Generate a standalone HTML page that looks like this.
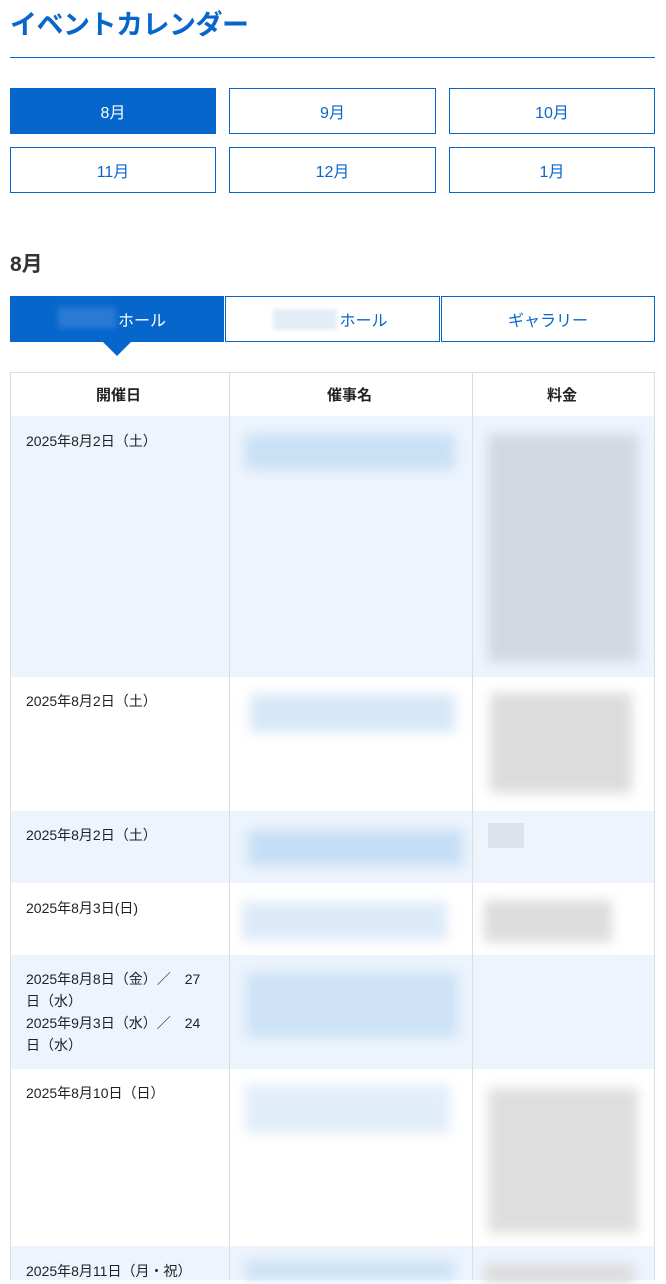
<!DOCTYPE html>
<html><head><meta charset="utf-8"><style>
*{margin:0;padding:0;box-sizing:border-box}
body{width:666px;height:1280px;overflow:hidden;background:#fff;font-family:"Liberation Sans","Noto Sans CJK JP",sans-serif;position:relative;color:#222}
.a{position:absolute}
h1{position:absolute;left:10px;top:3px;font-size:27px;color:#0766cc;font-weight:bold;letter-spacing:-0.5px}
.hr{left:10px;top:57px;width:645px;height:1px;background:#0766cc}
.b{position:absolute;border:1px solid #0766cc;color:#0766cc;font-size:16px;display:flex;align-items:center;justify-content:center;background:#fff}
.on{background:#0766cc;color:#fff}
.row{position:absolute;left:10px;width:645px}
.bl{position:absolute;filter:blur(6px)}
.d{position:absolute;left:26px;font-size:14px;line-height:22px;color:#222}
.v{position:absolute;top:372px;width:1px;height:908px;background:#ddd}
</style></head><body>
<h1>イベントカレンダー</h1>
<div class="a hr"></div>
<div class="b on" style="left:10px;top:88px;width:206px;height:46px">8月</div>
<div class="b" style="left:229px;top:88px;width:207px;height:46px">9月</div>
<div class="b" style="left:449px;top:88px;width:206px;height:46px">10月</div>
<div class="b" style="left:10px;top:147px;width:206px;height:46px">11月</div>
<div class="b" style="left:229px;top:147px;width:207px;height:46px">12月</div>
<div class="b" style="left:449px;top:147px;width:206px;height:46px">1月</div>
<div class="a" style="left:10px;top:248px;font-size:21px;font-weight:bold;color:#333">8月</div>
<div class="b on" style="left:10px;top:296px;width:214px;height:46px;padding-left:50px">ホール</div>
<div class="a" style="left:58px;top:307px;width:58px;height:21px;background:#2a7ad4;filter:blur(3px)"></div>
<div class="a" style="left:102px;top:341px;width:0;height:0;border-left:15px solid transparent;border-right:15px solid transparent;border-top:15px solid #0766cc"></div>
<div class="b" style="left:225px;top:296px;width:215px;height:46px;padding-left:62px">ホール</div>
<div class="a" style="left:273px;top:309px;width:64px;height:21px;background:#e3edf8;filter:blur(2px)"></div>
<div class="b" style="left:441px;top:296px;width:214px;height:46px">ギャラリー</div>

<div class="row" style="top:372px;height:44px;border:1px solid #ddd;border-bottom:none"></div>
<div class="a" style="left:96px;top:384px;font-size:15px;font-weight:bold">開催日</div>
<div class="a" style="left:327px;top:384px;font-size:15px;font-weight:bold">催事名</div>
<div class="a" style="left:547px;top:384px;font-size:15px;font-weight:bold">料金</div>

<div class="row" style="top:416px;height:261px;background:#edf4fd"></div>
<div class="row" style="top:811px;height:72px;background:#edf4fd"></div>
<div class="row" style="top:955px;height:114px;background:#edf4fd"></div>
<div class="row" style="top:1246px;height:34px;background:#edf4fd"></div>
<div class="a" style="left:10px;top:372px;width:1px;height:908px;background:#ddd"></div>
<div class="a" style="left:654px;top:372px;width:1px;height:908px;background:#ddd"></div>
<div class="v" style="left:229px"></div>
<div class="v" style="left:472px"></div>

<div class="d" style="top:430px">2025年8月2日（土）</div>
<div class="d" style="top:690px">2025年8月2日（土）</div>
<div class="d" style="top:824px">2025年8月2日（土）</div>
<div class="d" style="top:897px">2025年8月3日(日)</div>
<div class="d" style="top:968px">2025年8月8日（金）／　27<br>日（水）<br>2025年9月3日（水）／　24<br>日（水）</div>
<div class="d" style="top:1082px">2025年8月10日（日）</div>
<div class="d" style="top:1260px">2025年8月11日（月・祝）</div>

<div class="bl" style="left:245px;top:434px;width:210px;height:36px;background:#c9e0f5"></div>
<div class="bl" style="left:250px;top:694px;width:205px;height:38px;background:#d6e7f7"></div>
<div class="bl" style="left:248px;top:830px;width:215px;height:36px;background:#c6def5"></div>
<div class="bl" style="left:242px;top:902px;width:205px;height:38px;background:#dceaf8"></div>
<div class="bl" style="left:246px;top:972px;width:212px;height:66px;background:#cde2f6"></div>
<div class="bl" style="left:245px;top:1085px;width:205px;height:48px;background:#e1edf9"></div>
<div class="bl" style="left:245px;top:1260px;width:210px;height:20px;background:#cde2f6"></div>

<div class="bl" style="left:488px;top:434px;width:150px;height:228px;background:#d1d8e2"></div>
<div class="bl" style="left:490px;top:693px;width:142px;height:100px;background:#dcdcdc"></div>
<div class="a" style="left:488px;top:823px;width:36px;height:25px;background:#dde3ec"></div>
<div class="bl" style="left:484px;top:900px;width:128px;height:42px;background:#dcdcdc"></div>
<div class="bl" style="left:488px;top:1088px;width:150px;height:145px;background:#dedede"></div>
<div class="bl" style="left:484px;top:1264px;width:150px;height:20px;background:#dcdcdc"></div>
</body></html>
